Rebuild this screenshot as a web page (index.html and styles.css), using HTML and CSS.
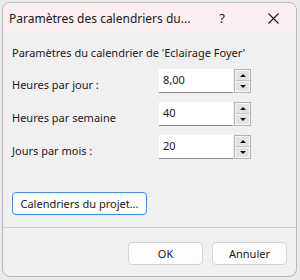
FILE: index.html
```html
<!DOCTYPE html>
<html lang="fr">
<head>
    <meta charset="UTF-8">
    <meta name="viewport" content="width=device-width, initial-scale=1.0">
    <title>Paramètres des calendriers</title>
    <link rel="stylesheet" href="styles.css">
</head>
<body>
    <div class="window">
        <div class="titlebar">
            <span class="title">Paramètres des calendriers du...</span>
            <span class="tb-btn help">?</span>
            <span class="tb-btn close">
                <svg width="11" height="11" viewBox="0 0 11 11"><path d="M0.5 0.5 L10.5 10.5 M10.5 0.5 L0.5 10.5" stroke="#1a1a1a" stroke-width="1.1" fill="none"/></svg>
            </span>
        </div>

        <div class="content">
            <p class="heading">Paramètres du calendrier de 'Eclairage Foyer'</p>

            <div class="fields">
                <div class="field">
                    <label>Heures par jour :</label>
                    <div class="input"><span>8,00</span></div>
                    <div class="spinner"><span class="up"></span><span class="down"></span></div>
                </div>
                <div class="field">
                    <label>Heures par semaine</label>
                    <div class="input"><span>40</span></div>
                    <div class="spinner"><span class="up"></span><span class="down"></span></div>
                </div>
                <div class="field">
                    <label>Jours par mois :</label>
                    <div class="input"><span>20</span></div>
                    <div class="spinner"><span class="up"></span><span class="down"></span></div>
                </div>
            </div>

            <button class="btn btn-default">Calendriers du projet...</button>
        </div>

        <div class="footer">
            <button class="btn">OK</button>
            <button class="btn">Annuler</button>
        </div>
    </div>
</body>
</html>
```

FILE: styles.css
```css
*{
    margin: 0px;
    padding: 0px;
    box-sizing: border-box;
}

body{
    background-color: #ebebeb;
    font-family: "Noto Sans", "Open Sans", sans-serif;
    font-size: 11px;
    color: #1a1a1a;
    width: 300px;
    height: 280px;
    overflow: hidden;
}

.window{
    margin: 2px 0 0 2px;
    width: 295px;
    height: 275px;
    border: 1px solid #b8b8b8;
    border-radius: 8px;
    overflow: hidden;
    background-color: #f0f0f0;
    display: flex;
    flex-direction: column;
}

.titlebar{
    height: 30px;
    background-color: #f9eff1;
    display: flex;
    align-items: center;
    padding-left: 6px;
}

.title{
    flex: 1;
    font-size: 12px;
    white-space: nowrap;
}

.tb-btn{
    width: 46px;
    height: 30px;
    display: flex;
    align-items: center;
    justify-content: center;
}

.help{
    font-size: 13px;
    margin-right: 5px;
}

.content{
    flex: 1;
    padding: 12px 9px 0 9px;
}

.heading{
    line-height: 16px;
    margin-bottom: 8px;
}

.fields{
    display: flex;
    flex-direction: column;
    gap: 9px;
}

.field{
    display: flex;
    align-items: flex-start;
    height: 24px;
}

.field label{
    width: 147px;
    padding-top: 8px;
    line-height: 16px;
}

.input{
    width: 74px;
    height: 24px;
    background-color: white;
    border-bottom: 1px solid #8a8a8a;
    padding: 3px 0 0 4px;
    line-height: 16px;
}

.spinner{
    width: 17px;
    height: 24px;
    margin-left: 1px;
    border: 1px solid #b4b4b4;
    background-color: #e3e3e3;
    display: flex;
    flex-direction: column;
}

.spinner span{
    flex: 1;
    border: 1px solid #f7f7f7;
    display: flex;
    align-items: center;
    justify-content: center;
}

.spinner .up{
    border-bottom: 1px solid #c4c4c4;
}

.spinner .up::after{
    content: "";
    border-left: 3px solid transparent;
    border-right: 3px solid transparent;
    border-bottom: 3px solid #111;
}

.spinner .down::after{
    content: "";
    border-left: 3px solid transparent;
    border-right: 3px solid transparent;
    border-top: 3px solid #111;
}

.btn{
    font-family: "Noto Sans", "Open Sans", sans-serif;
    font-size: 11px;
    color: #1a1a1a;
    height: 23px;
    background-color: #fdfdfd;
    border: 1px solid #d3d3d3;
    border-radius: 4px;
}

.btn-default{
    margin-top: 33px;
    width: 135px;
    border-color: #3f8fdc;
}

.footer{
    height: 49px;
    border-top: 1px solid #cdcdcd;
    display: flex;
    justify-content: flex-end;
    gap: 9px;
    padding: 14px 9px 0 0;
}

.footer .btn{
    width: 75px;
}
```
